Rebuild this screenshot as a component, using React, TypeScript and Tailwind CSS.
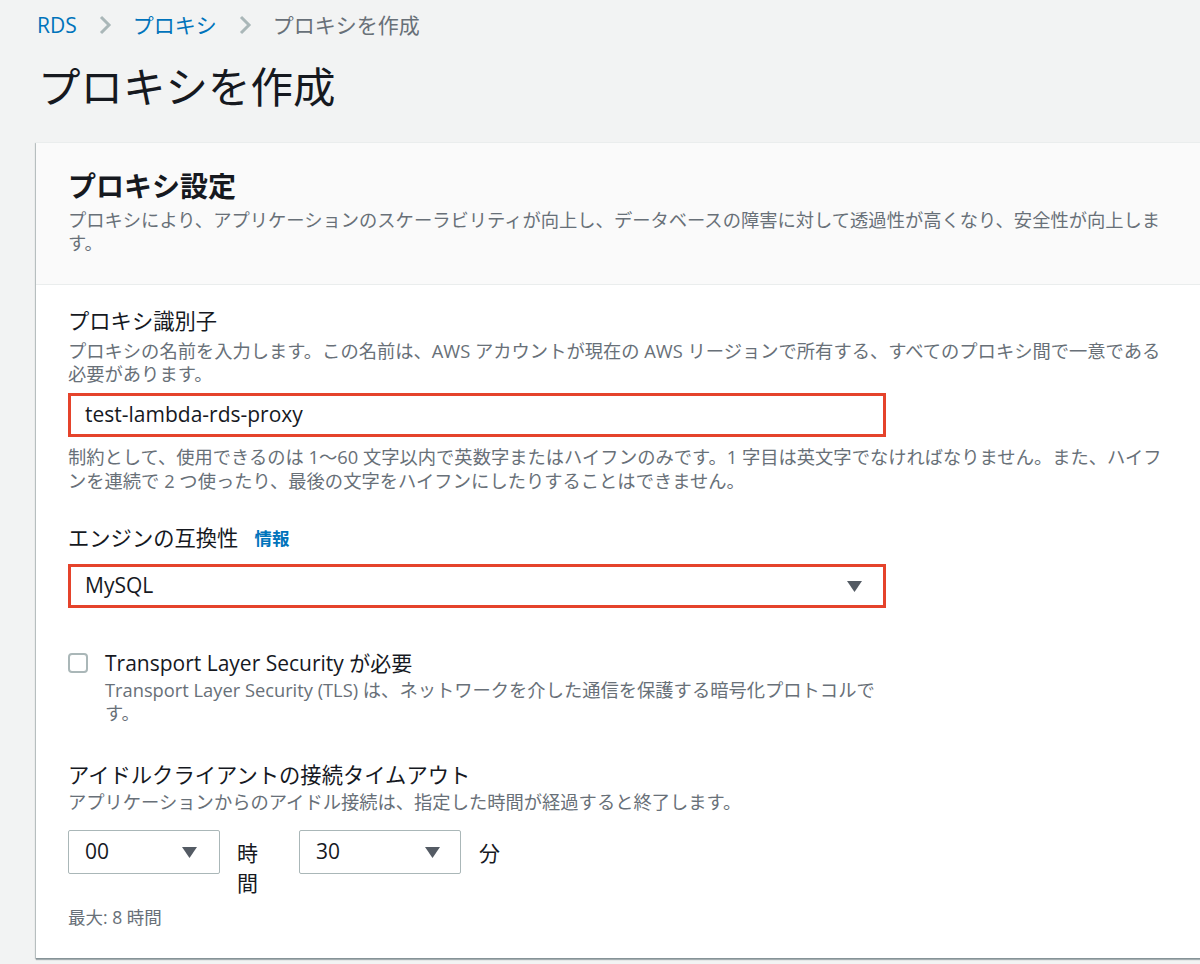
import { Fragment } from 'react';

function Chevron() {
  return (
    <svg width="14" height="22" viewBox="0 0 14 22" className="mx-[21px]">
      <polyline points="3,3 11,11 3,19" fill="none" stroke="#aab7b8" strokeWidth="3" />
    </svg>
  );
}

function Caret() {
  return (
    <svg width="15" height="11" viewBox="0 0 15 11">
      <polygon points="0,0 15,0 7.5,11" fill="#545b64" />
    </svg>
  );
}

export default function App() {
  const crumbs = ['RDS', 'プロキシ'];

  return (
    <div className="min-h-[964px] w-[1200px] overflow-hidden bg-[#f2f3f3] font-['Open_Sans','Noto_Sans_CJK_JP',sans-serif] text-[#16191f]">
      {/* Breadcrumb */}
      <nav className="flex items-center pl-[37px] pt-[10px] h-[40px] text-[21px] leading-[30px]">
        {crumbs.map((c) => (
          <Fragment key={c}>
            <span className="text-[#0073bb]">{c}</span>
            <Chevron />
          </Fragment>
        ))}
        <span className="text-[#687078]">プロキシを作成</span>
      </nav>

      {/* Page title */}
      <h1 className="pl-[38px] mt-[21px] text-[42.5px] leading-[52px] font-normal">プロキシを作成</h1>

      {/* Card */}
      <div className="ml-[36px] mt-[29px] w-[1220px] bg-white border-t border-[#eaeded] shadow-[0_2px_1px_0_rgba(0,28,36,0.3),-1px_1px_1px_0_rgba(0,28,36,0.2)]">
        {/* Card header */}
        <div className="bg-[#fafafa] border-b border-[#eaeded] pl-[32px] pt-[25px] pb-[30px]">
          <h2 className="text-[28px] leading-[36px] font-bold">プロキシ設定</h2>
          <p className="mt-[4px] w-[1120px] text-[18.3px] leading-[23px] text-[#687078]">
            プロキシにより、アプリケーションのスケーラビリティが向上し、データベースの障害に対して透過性が高くなり、安全性が向上しま
            <br />
            す。
          </p>
        </div>

        {/* Card body */}
        <div className="pl-[32px] pt-[22px] pb-[30px]">
          {/* Proxy identifier */}
          <div>
            <label className="block text-[21.3px] leading-[28px]">プロキシ識別子</label>
            <p className="mt-[4px] w-[1120px] text-[18.3px] leading-[23px] text-[#687078]">
              プロキシの名前を入力します。この名前は、AWS アカウントが現在の AWS リージョンで所有する、すべてのプロキシ間で一意である
              <br />
              必要があります。
            </p>
            <div className="mt-[8px] w-[818px] h-[44px] flex items-center border-[3px] border-[#e5432b] px-[14px] text-[21px]">
              test-lambda-rds-proxy
            </div>
            <p className="mt-[8px] w-[1120px] text-[18.3px] leading-[24px] text-[#687078]">
              制約として、使用できるのは 1〜60 文字以内で英数字またはハイフンのみです。1 字目は英文字でなければなりません。また、ハイフ
              <br />
              ンを連続で 2 つ使ったり、最後の文字をハイフンにしたりすることはできません。
            </p>
          </div>

          {/* Engine compatibility */}
          <div className="mt-[31px]">
            <label className="flex items-center text-[21.3px] leading-[28px]">
              エンジンの互換性
              <span className="ml-[16px] text-[17.5px] font-bold text-[#0073bb]">情報</span>
            </label>
            <div className="mt-[12px] w-[818px] h-[44px] flex items-center justify-between border-[3px] border-[#e5432b] pl-[14px] pr-[21px] text-[21px]">
              <span>MySQL</span>
              <Caret />
            </div>
          </div>

          {/* TLS */}
          <div className="mt-[41px] flex">
            <div className="mt-[4px] w-[20px] h-[20px] rounded-[4px] border-2 border-[#aab7b8] bg-white shrink-0" />
            <div className="ml-[17px] w-[790px]">
              <div className="text-[21px] leading-[28px]">Transport Layer Security が必要</div>
              <p className="mt-[1px] text-[18.3px] leading-[23px] text-[#687078]">
                Transport Layer Security (TLS) は、ネットワークを介した通信を保護する暗号化プロトコルで
                <br />
                す。
              </p>
            </div>
          </div>

          {/* Idle client timeout */}
          <div className="mt-[37px]">
            <label className="block text-[21.3px] leading-[28px]">アイドルクライアントの接続タイムアウト</label>
            <p className="mt-[1px] text-[18.3px] leading-[23px] text-[#687078]">
              アプリケーションからのアイドル接続は、指定した時間が経過すると終了します。
            </p>
            <div className="mt-[17px] flex items-start">
              <div className="w-[152px] h-[44px] flex items-center justify-between border border-[#aab7b8] rounded-[2px] pl-[16px] pr-[22px] text-[21px]">
                <span>00</span>
                <Caret />
              </div>
              <span className="ml-[17px] mt-[8px] w-[21px] text-[21px] leading-[30px]">時間</span>
              <div className="ml-[41px] w-[162px] h-[44px] flex items-center justify-between border border-[#aab7b8] rounded-[2px] pl-[16px] pr-[20px] text-[21px]">
                <span>30</span>
                <Caret />
              </div>
              <span className="ml-[18px] mt-[8px] text-[21px] leading-[30px]">分</span>
            </div>
            <p className="mt-[8px] text-[17.5px] leading-[22px] text-[#687078]">最大: 8 時間</p>
          </div>
        </div>
      </div>
    </div>
  );
}
